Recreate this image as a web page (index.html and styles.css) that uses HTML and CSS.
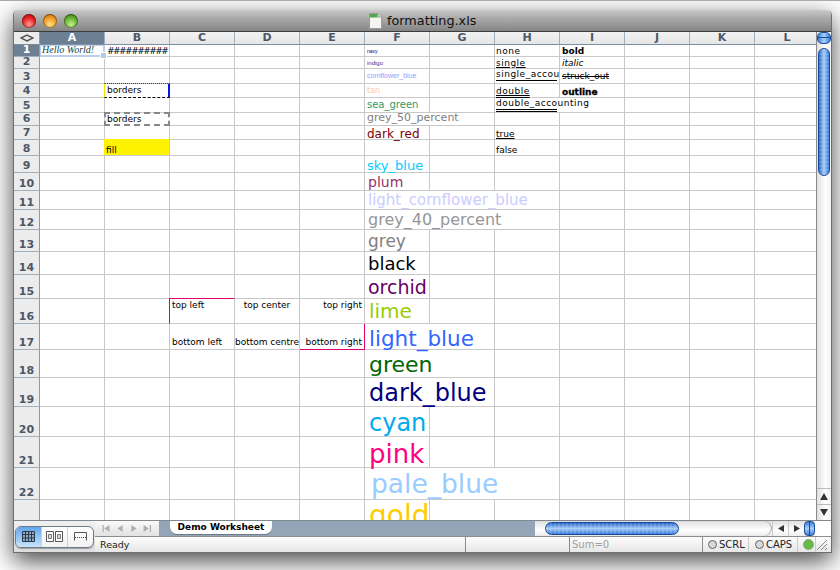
FILE: index.html
```html
<!DOCTYPE html>
<html>
<head>
    <title>formatting.xls</title>
    <link rel="stylesheet" href="styles.css">
</head>
<body>
    <section class="window">
        <header class="titlebar">
            <div class="lights">
                <span class="light light-red"></span>
                <span class="light light-amber"></span>
                <span class="light light-green"></span>
            </div>
            <div class="doctitle">
                <svg width="13" height="16" viewBox="0 0 13 16">
                    <path d="M0.5 0.5H9L12.5 4V15.5H0.5Z" fill="#f4f4f0" stroke="#9a9a9a"/>
                    <path d="M1 1H8.5V4.5H1Z" fill="#4fa845"/>
                    <path d="M9 0.5V4H12.5" fill="#ddd" stroke="#9a9a9a"/>
                </svg>
                <span>formatting.xls</span>
            </div>
        </header>

        <div class="main">
            <div class="sheet">
                <!-- header -->
                <div class="corner"><svg width="14" height="8" viewBox="0 0 14 8"><path d="M1 4L7 1L13 4L7 7Z" fill="none" stroke="#555" stroke-width="1.4"/></svg></div>
                <div class="colhead sel">A</div><div class="colhead">B</div><div class="colhead">C</div><div class="colhead">D</div><div class="colhead">E</div><div class="colhead">F</div><div class="colhead">G</div><div class="colhead">H</div><div class="colhead">I</div><div class="colhead">J</div><div class="colhead">K</div><div class="colhead">L</div>

                <!-- 1 -->
                <div class="rowhead sel">1</div><div class="active"><span class="hello">Hello World!</span><i class="handle"></i></div><div class="txt hashes">##########</div><div></div><div></div><div></div><div class="navy">navy</div><div></div><div class="txt colh wide">none</div><div class="txt bold">bold</div><div></div><div></div><div></div>
                <!-- 2 -->
                <div class="rowhead">2</div><div></div><div></div><div></div><div></div><div></div><div class="indigo">indigo</div><div></div><div class="txt colh wide"><u>single</u></div><div class="txt ital">italic</div><div></div><div></div><div></div>
                <!-- 3 -->
                <div class="rowhead">3</div><div></div><div></div><div></div><div></div><div></div><div class="cornflower">cornflower_blue</div><div></div><div class="txt colh wide clip raised"><span class="acct">single_accounting</span></div><div class="txt strike raised">struck_out</div><div></div><div></div><div></div>
                <!-- 4 -->
                <div class="rowhead">4</div><div></div><div class="txt borders1">borders</div><div></div><div></div><div></div><div class="tan">tan</div><div></div><div class="txt colh wide nudge"><u class="dbl">double</u></div><div class="txt outline">outline</div><div></div><div></div><div></div>
                <!-- 5 -->
                <div class="rowhead">5</div><div></div><div></div><div></div><div></div><div></div><div class="seagreen">sea_green</div><div></div><div class="txt colh wide span2"><span class="acct dblacct">double_accounting</span></div><div></div><div></div><div></div>
                <!-- 6 -->
                <div class="rowhead">6</div><div></div><div class="txt borders2">borders</div><div></div><div></div><div></div><div class="grey50 span2">grey_50_percent</div><div></div><div></div><div></div><div></div><div></div>
                <!-- 7 -->
                <div class="rowhead">7</div><div></div><div></div><div></div><div></div><div></div><div class="darkred">dark_red</div><div></div><div class="txt colh"><u>true</u></div><div></div><div></div><div></div><div></div>
                <!-- 8 -->
                <div class="rowhead">8</div><div></div><div class="txt fill">fill</div><div></div><div></div><div></div><div></div><div></div><div class="txt colh">false</div><div></div><div></div><div></div><div></div>
                <!-- 9 -->
                <div class="rowhead">9</div><div></div><div></div><div></div><div></div><div></div><div class="skyblue">sky_blue</div><div></div><div></div><div></div><div></div><div></div><div></div>
                <!-- 10 -->
                <div class="rowhead">10</div><div></div><div></div><div></div><div></div><div></div><div class="plum">plum</div><div></div><div></div><div></div><div></div><div></div><div></div>
                <!-- 11 -->
                <div class="rowhead">11</div><div></div><div></div><div></div><div></div><div></div><div class="lightcorn span3">light_cornflower_blue</div><div></div><div></div><div></div><div></div>
                <!-- 12 -->
                <div class="rowhead">12</div><div></div><div></div><div></div><div></div><div></div><div class="grey40 span3">grey_40_percent</div><div></div><div></div><div></div><div></div>
                <!-- 13 -->
                <div class="rowhead">13</div><div></div><div></div><div></div><div></div><div></div><div class="grey">grey</div><div></div><div></div><div></div><div></div><div></div><div></div>
                <!-- 14 -->
                <div class="rowhead">14</div><div></div><div></div><div></div><div></div><div></div><div class="black">black</div><div></div><div></div><div></div><div></div><div></div><div></div>
                <!-- 15 -->
                <div class="rowhead">15</div><div></div><div></div><div></div><div></div><div></div><div class="orchid">orchid</div><div></div><div></div><div></div><div></div><div></div><div></div>
                <!-- 16 -->
                <div class="rowhead">16</div><div></div><div></div><div class="small top pinktl">top left</div><div class="small top center">top center</div><div class="small top right">top right</div><div class="lime">lime</div><div></div><div></div><div></div><div></div><div></div><div></div>
                <!-- 17 -->
                <div class="rowhead">17</div><div></div><div></div><div class="small bottom">bottom left</div><div class="small bottom center clip">bottom centre</div><div class="small bottom right pinkbr">bottom right</div><div class="lightblue span2">light_blue</div><div></div><div></div><div></div><div></div><div></div>
                <!-- 18 -->
                <div class="rowhead">18</div><div></div><div></div><div></div><div></div><div></div><div class="green span2">green</div><div></div><div></div><div></div><div></div><div></div>
                <!-- 19 -->
                <div class="rowhead">19</div><div></div><div></div><div></div><div></div><div></div><div class="darkblue span2">dark_blue</div><div></div><div></div><div></div><div></div><div></div>
                <!-- 20 -->
                <div class="rowhead">20</div><div></div><div></div><div></div><div></div><div></div><div class="cyan">cyan</div><div></div><div></div><div></div><div></div><div></div><div></div>
                <!-- 21 -->
                <div class="rowhead">21</div><div></div><div></div><div></div><div></div><div></div><div class="pink">pink</div><div></div><div></div><div></div><div></div><div></div><div></div>
                <!-- 22 -->
                <div class="rowhead">22</div><div></div><div></div><div></div><div></div><div></div><div class="paleblue span3">pale_blue</div><div></div><div></div><div></div><div></div>
                <!-- 23 -->
                <div class="rowhead">23</div><div></div><div></div><div></div><div></div><div></div><div class="gold">gold</div><div></div><div></div><div></div><div></div><div></div><div></div>
            </div>

            <div class="vscroll">
                <div class="vsplit"></div>
                <div class="vthumb"></div>
                <div class="vtrack"></div>
                <div class="vbtn"><svg width="8" height="7" viewBox="0 0 9 8"><path d="M4.5 0L9 8H0Z" fill="#333"/></svg></div>
                <div class="vbtn"><svg width="8" height="7" viewBox="0 0 9 8"><path d="M0 0H9L4.5 8Z" fill="#333"/></svg></div>
            </div>
        </div>

        <footer class="footer">
            <div class="views">
                <div class="viewgroup">
                    <div class="view on">
                        <svg width="13" height="11" viewBox="0 0 13 11"><path d="M0.5 0.5H12.5V10.5H0.5Z M0.5 3.5H12.5 M0.5 7H12.5 M3.5 0.5V10.5 M6.5 0.5V10.5 M9.5 0.5V10.5" fill="#8fa8c4" stroke="#2c3a4c" stroke-width="1"/></svg>
                    </div>
                    <div class="view">
                        <svg width="17" height="11" viewBox="0 0 17 11"><path d="M0.5 0.5H7.5V10.5H0.5Z M9.5 0.5H16.5V10.5H9.5Z" fill="#fff" stroke="#555"/><path d="M2.5 3.5H5.5V7.5H2.5Z M11.5 3.5H14.5V7.5H11.5Z" fill="#ddd" stroke="#777"/></svg>
                    </div>
                    <div class="view">
                        <svg width="13" height="9" viewBox="0 0 13 9"><path d="M0.5 0.5H12.5M0.5 0.5V8.5M12.5 0.5V8.5" fill="none" stroke="#555"/><path d="M1 5.5H12" fill="none" stroke="#444" stroke-dasharray="1 1"/></svg>
                    </div>
                </div>
            </div>
            <div class="bars">
                <div class="tabrow">
                    <div class="tabnav">
                        <svg width="52" height="7" viewBox="0 0 56 8" fill="#b0b0b0">
                            <path d="M0 0H1.5V8H0ZM8 0V8L2 4Z"/>
                            <path d="M23 0V8L17 4Z"/>
                            <path d="M33 0L39 4L33 8Z"/>
                            <path d="M47 0L53 4L47 8ZM54 0H55.5V8H54Z"/>
                        </svg>
                    </div>
                    <div class="tabstrip"><div class="tab">Demo Worksheet</div></div>
                    <div class="hscroll">
                        <div class="htrack"><div class="hthumb"></div></div>
                        <div class="hbtn"><svg width="6" height="7" viewBox="0 0 7 8"><path d="M7 0V8L0 4Z" fill="#333"/></svg></div>
                        <div class="hbtn"><svg width="6" height="7" viewBox="0 0 7 8"><path d="M0 0L7 4L0 8Z" fill="#333"/></svg></div>
                        <div class="hsplit"></div>
                    </div>
                    <div class="blankcorner"></div>
                </div>
                <div class="statusrow">
                    <div class="st st-ready">Ready</div>
                    <div class="st st-blank"></div>
                    <div class="st st-sum">Sum=0</div>
                    <div class="st st-scrl"><i class="dot"></i>SCRL</div>
                    <div class="st st-caps"><i class="dot"></i>CAPS</div>
                    <div class="st st-led"><i class="led"></i></div>
                    <div class="st st-grip">
                        <svg width="12" height="12" viewBox="0 0 12 12"><path d="M1 11L11 1M5 11L11 5M9 11L11 9" stroke="#888" fill="none"/></svg>
                    </div>
                </div>
            </div>
        </footer>
    </section>
</body>
</html>
```

FILE: styles.css
```css
html, body {
    margin: 0;
    background: #fff;
}
body {
    height: 561px;
    padding: 9px 0 0 13px;
    border-top: 1px solid #aaa;
    overflow: hidden;
    font-family: "DejaVu Sans", sans-serif;
}
.window {
    width: 817px;
    border: 1px solid #6e6e6e;
    border-top: 0;
    border-radius: 5px 5px 0 0;
    box-shadow: 0 8px 24px rgba(0,0,0,.72);
}

/* title bar */
.titlebar {
    height: 22px;
    box-sizing: border-box;
    display: flex;
    align-items: center;
    border-radius: 5px 5px 0 0;
    border-bottom: 1px solid #3c3c3c;
    background: linear-gradient(#c9c9c9, #a9a9a9 40%, #858585);
}
.lights {
    display: flex;
    gap: 7px;
    padding-left: 8px;
}
.light {
    width: 14px;
    height: 14px;
    border-radius: 50%;
    box-shadow: inset 0 0 0 1px rgba(0,0,0,.35);
}
.light-red { background: radial-gradient(circle at 50% 75%, #ff9a90, #e81c20 55%, #9a0c10); }
.light-amber { background: radial-gradient(circle at 50% 75%, #ffe08a, #f09a20 55%, #a85c10); }
.light-green { background: radial-gradient(circle at 50% 75%, #c8f08a, #62b030 55%, #336c18); }
.doctitle {
    display: flex;
    align-items: center;
    gap: 5px;
    margin-left: 291px;
    color: #111;
    font-size: 12.8px;
}

/* sheet */
.main {
    display: flex;
    height: 488px;
}
.sheet {
    width: 802px;
    height: 488px;
    overflow: hidden;
    flex: none;
    display: grid;
    grid-template-columns: 26px repeat(12, 65px);
    grid-template-rows: 13px 12px 12px 15px 14px 15px 13px 14px 16px 17px 18px 19px 20px 22px 23px 24px 25px 26px 28px 29px 30px 31px 32px 33px;
    background: #fff;
    color: #000;
}
.sheet > div {
    box-sizing: border-box;
    border-right: 1px solid #c9c9c9;
    border-bottom: 1px solid #c9c9c9;
    display: flex;
    align-items: flex-end;
    padding: 0 2px;
    white-space: nowrap;
    font-size: 9px;
    line-height: 1.15;
}
.sheet > .corner {
    background: #ececec;
    border-right: 1px solid #8d9aa8;
    border-bottom: 1px solid #7d8a98;
    align-items: center;
    justify-content: center;
    padding: 0;
}
.sheet > .colhead {
    background: linear-gradient(#f2f2f2, #e6e6e6);
    border-right: 1px solid #a3afbb;
    border-bottom: 1px solid #7d8fa2;
    color: #4c5868;
    font-weight: bold;
    font-size: 11px;
    justify-content: center;
    align-items: center;
}
.sheet > .rowhead {
    background: #ececec;
    border-right: 1px solid #8d9aa8;
    border-bottom: 1px solid #a3afbb;
    color: #4c5868;
    font-weight: bold;
    font-size: 11px;
    justify-content: center;
    padding: 0;
    line-height: 12px;
}
.sheet > .sel {
    background: #6d7f92;
    color: #fff;
}

.sheet > .active {
    position: relative;
    border: 2px solid #bccfe8;
    border-top-width: 1px;
    border-left-width: 1px;
    padding: 0 1px;
    background: #fff;
}
.hello {
    font: italic 10px "Liberation Serif", serif;
    color: #15484a;
}
.handle {
    position: absolute;
    right: -4px;
    bottom: -4px;
    width: 5px;
    height: 5px;
    background: #b6cae6;
    border: 1px solid #fff;
}
.txt { color: #000; }
.sheet > .hashes { letter-spacing: -1.5px; }
.sheet > .colh { padding-left: 1px; }
.wide { letter-spacing: .5px; }
.bold { font-weight: bold; }
.ital { font-style: italic; }
.strike { text-decoration: line-through; }
.sheet > .raised { padding-bottom: 2px; }
.sheet > .nudge { padding-bottom: 1px; }
.outline {
    font-weight: bold;
    -webkit-text-stroke: .3px #000;
}
u { text-underline-offset: 1px; }
u.dbl { text-decoration-style: double; }
.sheet > .clip { overflow: hidden; }
.acct {
    display: inline-block;
    width: 61px;
    border-bottom: 1px solid #000;
    line-height: 11px;
}
.dblacct { border-bottom: 3px double #000; }
.span2 { grid-column: span 2; }
.span3 { grid-column: span 3; }

/* drawn borders sit on the gridlines, so these cells reach over them by 1px */
.sheet > .borders1 {
    margin: -1px 0 0 -1px;
    padding-bottom: 2px;
    border-top: 1px dotted #3a1aa0;
    border-left: 1px solid #f2e200;
    border-right: 2px solid #0a18d8;
    border-bottom: 1px dashed #000;
}
.sheet > .borders2 {
    margin: -1px 0 0 -1px;
    border: 2px dashed #888;
    padding-left: 1px;
}
.sheet > .fill {
    margin: -1px 0 0 -1px;
    background: #fff200;
}

.sheet > .top { align-items: flex-start; padding-top: 1px; }
.sheet > .bottom { padding-bottom: 2px; }
.sheet > .center { justify-content: center; padding-left: 0; padding-right: 0; }
.sheet > .right { justify-content: flex-end; }
.sheet > .pinktl {
    margin: -1px 0 0 -1px;
    border-top: 1px solid #e0006e;
    border-left: 1px solid #e0006e;
}
.sheet > .pinkbr {
    border-right: 1px solid #e0006e;
    border-bottom: 1px solid #e0006e;
}

/* font colours, one per row in F */
.navy { color: #000080; }
.sheet > .navy { font: 5px "Liberation Sans", sans-serif; padding-bottom: 2px; }
.indigo { color: #333399; }
.sheet > .indigo { font: 6px "Liberation Sans", sans-serif; padding-bottom: 2px; }
.cornflower { color: #9999ff; }
.sheet > .cornflower { font: 7px "Liberation Sans", sans-serif; padding-bottom: 4px; }
.tan { color: #ffcc99; }
.sheet > .tan { font-size: 8px; padding-bottom: 2px; }
.seagreen { color: #339966; }
.sheet > .seagreen { font-size: 10px; padding-bottom: 2px; }
.grey50 { color: #808080; }
.sheet > .grey50 { font-size: 11px; }
.darkred { color: #800000; }
.sheet > .darkred { font-size: 12px; line-height: 10px; }
.skyblue { color: #00ccff; }
.sheet > .skyblue { font-size: 13px; line-height: 1; }
.plum { color: #993366; }
.sheet > .plum { font-size: 14px; padding-left: 3px; }
.lightcorn { color: #ccccff; }
.sheet > .lightcorn { font-size: 15px; padding-left: 3px; }
.grey40 { color: #969696; }
.sheet > .grey40 { font-size: 16px; padding-left: 3px; }
.grey { color: #808080; }
.sheet > .grey { font-size: 17px; padding-left: 3px; line-height: 1.04; }
.black { color: #000; }
.sheet > .black { font-size: 18px; padding-left: 3px; line-height: 1.04; }
.orchid { color: #660066; }
.sheet > .orchid { font-size: 19px; padding-left: 3px; line-height: 1.04; }
.lime { color: #99cc00; }
.sheet > .lime { font-size: 20px; padding-left: 4px; }
.lightblue { color: #3366ff; }
.sheet > .lightblue { font-size: 21.5px; padding-left: 4px; line-height: 1; }
.green { color: #006600; }
.sheet > .green { font-size: 22px; padding-left: 4px; }
.darkblue { color: #000080; }
.sheet > .darkblue { font-size: 24px; padding-left: 4px; line-height: .98; }
.cyan { color: #00aaee; }
.sheet > .cyan { font-size: 24px; padding-left: 4px; line-height: .98; }
.pink { color: #ff0080; }
.sheet > .pink { font-size: 26px; padding-left: 4px; line-height: 1; }
.paleblue { color: #99ccff; }
.sheet > .paleblue { font-size: 26.5px; padding-left: 6px; line-height: 1.08; }
.gold { color: #ffcc00; }
.sheet > .gold { font-size: 28px; padding-left: 4px; line-height: 33px; }

/* scrollbars */
.vscroll {
    width: 15px;
    display: flex;
    flex-direction: column;
    align-items: center;
    border-left: 1px solid #8a8a8a;
    box-sizing: border-box;
    background: linear-gradient(90deg, #e0e0e0, #fff 60%, #f2f2f2);
}
.vsplit {
    width: 14px;
    height: 12px;
    border: 1px solid #1d4f9c;
    border-radius: 5px;
    box-sizing: border-box;
    background:
        linear-gradient(transparent 4px, #1d4f9c 4px 5px, transparent 5px),
        linear-gradient(90deg, #3e7fd8, #a8d0f8 50%, #3e7fd8);
}
.vthumb {
    width: 12px;
    height: 128px;
    margin-top: 4px;
    border: 1px solid #174a9a;
    border-radius: 6px;
    box-sizing: border-box;
    background:
        repeating-linear-gradient(rgba(255,255,255,.12) 0 2px, transparent 2px 4px),
        linear-gradient(90deg, #2868cc, #a6cdf8 50%, #3a7ad8);
}
.vtrack {
    flex: 1;
}
.vbtn {
    width: 100%;
    height: 16px;
    flex: none;
    border-top: 1px solid #bbb;
    box-sizing: border-box;
    display: flex;
    align-items: center;
    justify-content: center;
}

/* footer */
.footer {
    display: flex;
    height: 32px;
    border-top: 1px solid #808890;
    box-sizing: border-box;
    background: #ededed;
}
.views {
    width: 81px;
    flex: none;
    display: flex;
    align-items: center;
    justify-content: center;
    background: linear-gradient(#f0f0f0, #dedede);
}
.viewgroup {
    display: flex;
    height: 20px;
    border: 1px solid #6f7a88;
    border-radius: 6px;
    overflow: hidden;
    background: linear-gradient(#fff, #f1f1f1);
    box-shadow: 0 1px 1px rgba(0,0,0,.3);
}
.view {
    width: 25px;
    display: flex;
    align-items: center;
    justify-content: center;
    border-right: 1px solid #d0d0d0;
}
.view:last-child { border-right: 0; }
.view.on {
    background: linear-gradient(#5ea6ee, #cbe4fb);
}
.bars {
    flex: 1;
    display: flex;
    flex-direction: column;
    min-width: 0;
}
.tabrow {
    height: 15px;
    display: flex;
    border-bottom: 1px solid #8c8c8c;
}
.tabnav {
    width: 64px;
    flex: none;
    display: flex;
    align-items: center;
    padding-left: 6px;
    box-sizing: border-box;
    background: linear-gradient(#fafafa, #e2e2e2);
}
.tabstrip {
    width: 376px;
    flex: none;
    background: #95a5b8;
    padding-left: 11px;
    box-sizing: border-box;
}
.tab {
    width: 102px;
    height: 13px;
    background: #fff;
    border-radius: 0 0 7px 7px;
    box-shadow: 0 1px 0 #6f7a88;
    font-size: 9px;
    font-weight: bold;
    line-height: 13px;
    text-align: center;
    color: #000;
}
.hscroll {
    width: 280px;
    flex: none;
    display: flex;
    align-items: center;
    padding-left: 3px;
    box-sizing: border-box;
    background: linear-gradient(#e0e0e0, #fff 60%, #eee);
}
.htrack {
    flex: 1;
    height: 15px;
    padding-left: 7px;
    border-radius: 0 8px 8px 0;
    box-shadow: inset -1px 0 1px #aaa;
    display: flex;
    align-items: center;
}
.hthumb {
    width: 134px;
    height: 13px;
    border: 1px solid #174a9a;
    border-radius: 7px;
    box-sizing: border-box;
    background:
        repeating-linear-gradient(90deg, rgba(255,255,255,.12) 0 2px, transparent 2px 4px),
        linear-gradient(#2868cc, #a6cdf8 50%, #3a7ad8);
}
.hbtn {
    width: 16px;
    flex: none;
    height: 100%;
    display: flex;
    align-items: center;
    justify-content: center;
    border-left: 1px solid #ccc;
    box-sizing: border-box;
}
.hsplit {
    width: 11px;
    height: 15px;
    flex: none;
    border: 1px solid #1d4f9c;
    border-radius: 4px;
    box-sizing: border-box;
    background:
        linear-gradient(90deg, transparent 4px, #1d4f9c 4px 5px, transparent 5px),
        linear-gradient(#3e7fd8, #a8d0f8 50%, #3e7fd8);
}
.blankcorner {
    flex: 1;
    background: #fff;
}
.statusrow {
    height: 16px;
    display: flex;
    background: linear-gradient(#fdfdfd, #e6e6e6);
}
.st {
    box-sizing: border-box;
    height: 100%;
    flex: none;
    display: flex;
    align-items: center;
    gap: 2px;
    border-right: 1px solid #8a8a8a;
    font-size: 10px;
    color: #222;
}
.st-ready { width: 371px; padding-left: 5px; font-size: 9.5px; }
.st-blank { width: 104px; }
.st-sum { width: 133px; padding-left: 2px; color: #a0a0a0; }
.st-scrl { width: 46px; padding-left: 5px; border-right-color: #ccc; }
.st-caps { width: 49px; padding-left: 6px; border-right-color: #ccc; }
.st-led { width: 18px; padding-left: 5px; border-right-color: #ccc; }
.st-grip { width: 15px; border-right: 0; }
.dot {
    width: 7px;
    height: 7px;
    border: 1px solid #666;
    border-radius: 50%;
    background: #d8d8d8;
}
.led {
    width: 9px;
    height: 9px;
    border-radius: 50%;
    border: 1px solid #8aaa7a;
    background: #66bb44;
}
```
